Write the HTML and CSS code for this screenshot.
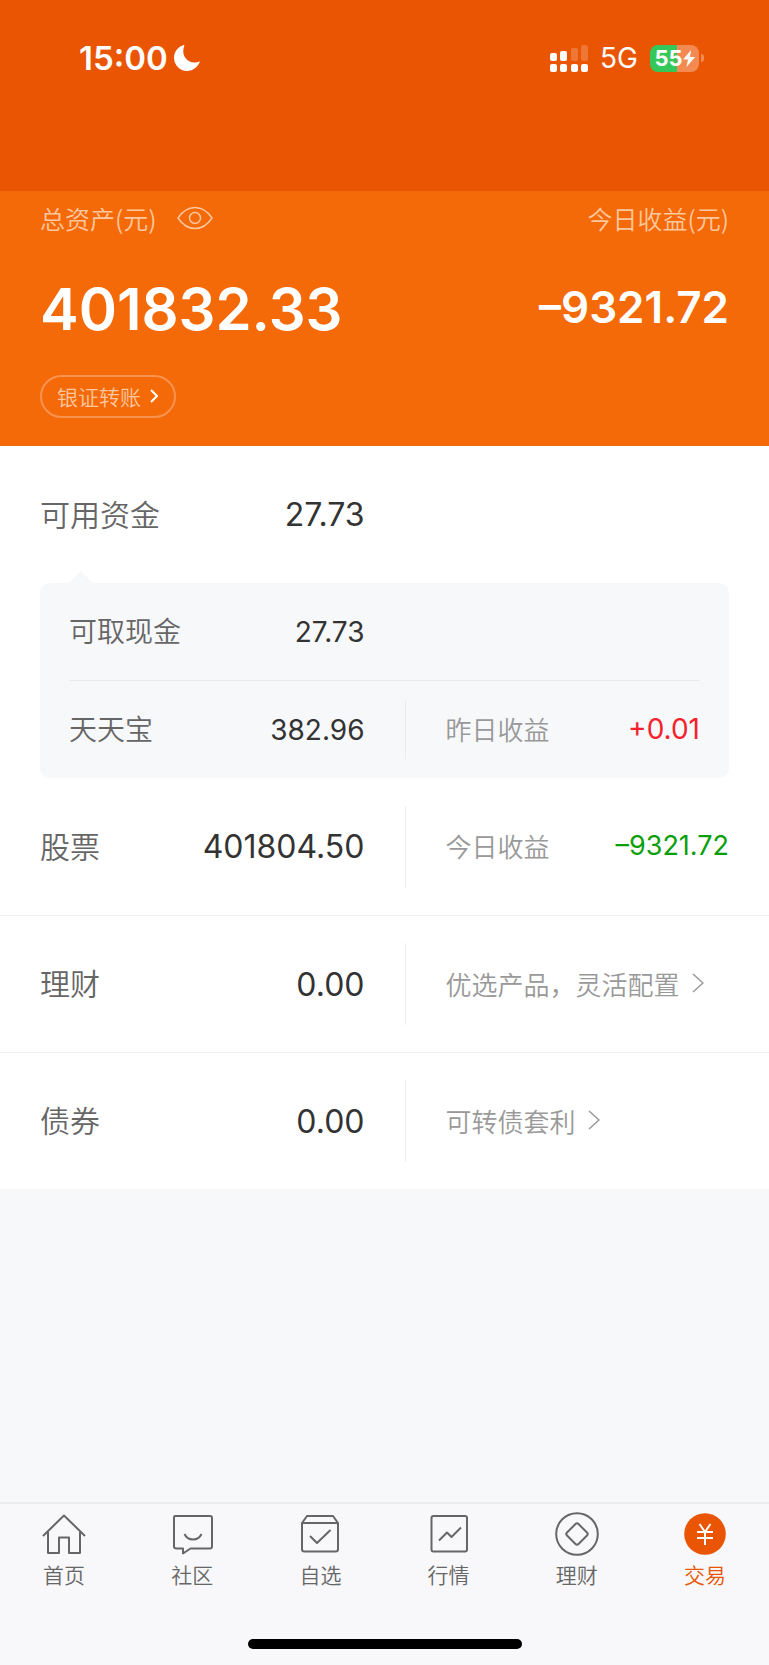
FILE: index.html
```html
<!DOCTYPE html>
<html lang="zh-CN">
<head>
  <meta charset="UTF-8">
  <meta name="viewport" content="width=device-width, initial-scale=1.0">
  <title>交易</title>
  <link rel="stylesheet" href="styles.css">
</head>
<body>
  <header class="status-bar">
    <div class="status-time">
      <span>15:00</span>
      <svg class="moon" viewBox="0 0 26 26"><path d="M10 0C4 1.500 0 6.800 0 12.800C0 20 5.800 26 13 26C18.800 26 23.800 22.300 26 16.600C25.400 16.300 25 16.600 24 16.900C15 19.500 7.800 12.500 9.500 3.500C9.800 2 10.800.6 10 0Z" fill="#fff"/></svg>
    </div>
    <div class="status-right">
      <svg class="signal" viewBox="0 0 38 28" fill="#fff">
        <rect x="0" y="9" width="7" height="8" rx="2"/>
        <rect x="10" y="7" width="7" height="10" rx="2"/>
        <rect x="21" y="4" width="7" height="13" rx="2" opacity=".2"/>
        <rect x="31" y="1" width="7" height="16" rx="2" opacity=".2"/>
        <rect x="0" y="20" width="7" height="8" rx="2"/>
        <rect x="10" y="20" width="7" height="8" rx="2"/>
        <rect x="21" y="20" width="7" height="8" rx="2"/>
        <rect x="31" y="20" width="7" height="8" rx="2"/>
      </svg>
      <span class="network">5G</span>
      <div class="battery">
        <div class="battery-body">
          <span>55</span>
          <svg class="bolt" viewBox="0 0 12 17"><path d="M8 0L0 9.500H5L3.500 17L12 7H7Z" fill="#fff"/></svg>
        </div>
        <span class="battery-cap"></span>
      </div>
    </div>
  </header>

  <section class="hero">
    <div class="hero-row hero-labels">
      <div class="hero-title">
        <span>总资产(元)</span>
        <button class="eye-btn" type="button" aria-label="显示或隐藏资产">
          <svg viewBox="0 0 36 24" fill="none" stroke="#fdc79f" stroke-width="1.500" stroke-linejoin="round"><path d="M1 12Q8 1.500 18 1.500T35 12Q28 22.500 18 22.500T1 12Z"/><circle cx="18" cy="12" r="5.500"/></svg>
        </button>
      </div>
      <span>今日收益(元)</span>
    </div>
    <div class="hero-row hero-amounts">
      <span class="total">401832.33</span>
      <span class="today">–9321.72</span>
    </div>
    <a class="transfer" href="#">银证转账
      <svg viewBox="0 0 8 14" fill="none" stroke="#fff" stroke-width="2"><path d="M1 1L7 7L1 13"/></svg>
    </a>
  </section>

  <main class="assets">
    <div class="row">
      <div class="main-cell"><span class="name">可用资金</span><span class="value">27.73</span></div>
    </div>

    <div class="panel">
      <div class="row">
        <div class="main-cell"><span class="name">可取现金</span><span class="value">27.73</span></div>
      </div>
      <div class="row">
        <div class="main-cell"><span class="name">天天宝</span><span class="value">382.96</span></div>
        <div class="side-cell"><span>昨日收益</span><span class="gain up">+0.01</span></div>
      </div>
    </div>

    <div class="row">
      <div class="main-cell"><span class="name">股票</span><span class="value">401804.50</span></div>
      <div class="side-cell"><span>今日收益</span><span class="gain down">–9321.72</span></div>
    </div>
    <div class="row line">
      <div class="main-cell"><span class="name">理财</span><span class="value">0.00</span></div>
      <div class="side-cell">
        <a href="#">优选产品，灵活配置
          <svg viewBox="0 0 12 20" fill="none" stroke="#999" stroke-width="1.500"><path d="M1 1L11 10L1 19"/></svg>
        </a>
      </div>
    </div>
    <div class="row line">
      <div class="main-cell"><span class="name">债券</span><span class="value">0.00</span></div>
      <div class="side-cell">
        <a href="#">可转债套利
          <svg viewBox="0 0 12 20" fill="none" stroke="#999" stroke-width="1.500"><path d="M1 1L11 10L1 19"/></svg>
        </a>
      </div>
    </div>
  </main>

  <footer class="bottom">
    <nav class="tabs">
      <a class="tab" href="#">
        <svg viewBox="0 0 44 44"><path d="M1 24L22 3.500L43 24M6 20V41H17V25.500H27V41H38V20"/></svg>
        <span>首页</span>
      </a>
      <a class="tab" href="#">
        <svg viewBox="0 0 44 44"><path d="M5 4H40Q42 4 42 6V34.500Q42 36.500 40 36.500H20.500L13 41.500V36.500H6.500Q4 36.500 4 34.500V6Q4 4 5 4Z"/><path d="M14.500 22Q17 27.500 23 27.500T31.500 22"/></svg>
        <span>社区</span>
      </a>
      <a class="tab" href="#">
        <svg viewBox="0 0 44 44"><path d="M4 11L9 4H35L40 11V37Q40 39.500 37.500 39.500H6.500Q4 39.500 4 37ZM4 11H40M12 24L19 31L32.500 18"/></svg>
        <span>自选</span>
      </a>
      <a class="tab" href="#">
        <svg viewBox="0 0 44 44"><rect x="4.500" y="4" width="35.500" height="35.500" rx="2"/><path d="M12 28.500L20 20.500L24.500 25L34 15.500"/></svg>
        <span>行情</span>
      </a>
      <a class="tab" href="#">
        <svg viewBox="0 0 44 44"><circle cx="22" cy="22" r="20.800"/><path d="M20.500 12Q22 10.500 23.500 12L32 20.500Q33.500 22 32 23.500L23.500 32Q22 33.500 20.500 32L12 23.500Q10.500 22 12 20.500Z"/></svg>
        <span>理财</span>
      </a>
      <a class="tab active" href="#">
        <svg viewBox="0 0 44 44"><circle class="coin" cx="22" cy="22" r="20.800"/><path class="yen" d="M16.500 12L22 20L27.500 12M14 20H30M14 26H30M22 20V33"/></svg>
        <span>交易</span>
      </a>
    </nav>
    <div class="home-bar"></div>
  </footer>
</body>
</html>
```
FILE: styles.css
```css
* {
  box-sizing: border-box;
}

body {
  margin: 0;
  min-height: 100vh;
  display: flex;
  flex-direction: column;
  font-family: "Noto Sans CJK SC", sans-serif;
  font-weight: 350;
  background-color: #f7f8fa;
  color: #333;
}

a {
  color: inherit;
  text-decoration: none;
}

svg {
  display: block;
  flex: none;
}

.status-bar,
.hero-amounts,
.value,
.gain {
  font-family: Inter, sans-serif;
}

/* status bar */
.status-bar {
  display: flex;
  justify-content: space-between;
  align-items: flex-start;
  height: 191px;
  padding: 38px 65px 0 79px;
  background-color: #ea5504;
  color: #fff;
}

.status-time,
.status-right {
  display: flex;
  align-items: center;
  height: 40px;
}

.status-time {
  gap: 6px;
  font-size: 33px;
  font-weight: 600;
}

.moon {
  width: 26px;
  height: 26px;
}

.signal {
  width: 38px;
  height: 28px;
}

.network {
  margin: 0 12px;
  font-size: 28px;
  font-weight: 400;
}

.battery {
  display: flex;
  align-items: center;
  gap: 2px;
}

.battery-body {
  display: flex;
  align-items: center;
  justify-content: center;
  width: 49px;
  height: 27px;
  border-radius: 8px;
  background: linear-gradient(to right, #34c759 55%, #f28a51 55%);
  font-size: 22px;
  font-weight: 700;
}

.bolt {
  width: 12px;
  height: 17px;
}

.battery-cap {
  width: 3px;
  height: 8px;
  border-radius: 0 3px 3px 0;
  background-color: #f28a51;
}

/* total assets */
.hero {
  height: 255px;
  padding: 8px 40px 0;
  background-color: #f56a08;
  color: #fdc79f;
}

.hero-row {
  display: flex;
  justify-content: space-between;
}

.hero-labels {
  height: 38px;
  align-items: center;
  font-size: 25px;
}

.hero-title {
  display: flex;
  align-items: center;
  gap: 20px;
}

.eye-btn {
  padding: 0;
  border: none;
  background: none;
  cursor: pointer;
}

.eye-btn svg {
  width: 36px;
  height: 24px;
}

.hero-amounts {
  height: 80px;
  margin: 32px 0 26px;
  line-height: 80px;
  color: #fff;
  font-weight: 600;
}

.total {
  font-size: 58px;
}

.today {
  font-size: 44px;
  line-height: 76px;
}

.transfer {
  display: inline-flex;
  align-items: center;
  gap: 9px;
  height: 43px;
  padding: 0 16px 2px 15px;
  border: 2px solid #f99350;
  border-radius: 22px;
  font-size: 21px;
}

.transfer svg {
  width: 8px;
  height: 14px;
}

/* asset list */
.assets {
  background-color: #fff;
}

.row {
  display: flex;
  align-items: center;
  height: 137px;
  padding: 0 40px;
}

.row.line {
  border-top: 1px solid #f0f0f2;
}

.main-cell {
  display: flex;
  align-items: center;
  justify-content: space-between;
  width: calc(50% - 20px);
}

.name {
  padding-bottom: 4px;
  font-size: 30px;
  color: #666;
}

.value {
  font-size: 32px;
  font-weight: 400;
}

.side-cell {
  flex: 1;
  display: flex;
  align-items: center;
  justify-content: space-between;
  height: 82px;
  margin-left: 40px;
  padding: 0 0 2px 40px;
  border-left: 1px solid #eeeff1;
  font-size: 26px;
  color: #999;
}

.side-cell a {
  display: flex;
  align-items: center;
  gap: 12px;
}

.side-cell svg {
  width: 12px;
  height: 20px;
}

.gain {
  font-size: 27px;
  font-weight: 400;
}

.up {
  color: #f5222d;
}

.down {
  color: #0a9f0a;
}

.panel {
  position: relative;
  margin: 0 40px;
  padding: 0 29px;
  border-radius: 10px;
  background-color: #f7f8fa;
}

/* arrow on the top edge */
.panel::before {
  content: "";
  position: absolute;
  left: 29px;
  top: -12px;
  border: 12px solid transparent;
  border-top: none;
  border-bottom-color: #f7f8fa;
}

.panel .row {
  height: 97px;
  padding: 0;
}

.panel .row + .row {
  height: 98px;
  border-top: 1px solid #e9ebed;
}

.panel .name {
  font-size: 28px;
}

.panel .value {
  font-size: 28px;
}

.panel .side-cell {
  height: 59px;
  border-color: #e9ebed;
}

.panel .gain {
  font-size: 28px;
}

/* tab bar */
.bottom {
  margin-top: auto;
  height: 163px;
  padding-top: 8px;
  border-top: 2px solid #ebecee;
  background-color: #f8f8fb;
}

.tabs {
  display: flex;
}

.tab {
  flex: 1;
  display: flex;
  flex-direction: column;
  align-items: center;
  gap: 2px;
  font-size: 21px;
  line-height: 32px;
  color: #666;
}

.tab svg {
  width: 44px;
  height: 44px;
  fill: none;
  stroke: #666;
  stroke-width: 2;
  stroke-linejoin: round;
}

.active {
  color: #ea5504;
}

.active .coin {
  fill: #ea5504;
  stroke: none;
}

.active .yen {
  stroke: #fff;
}

.home-bar {
  width: 274px;
  height: 10px;
  margin: 49px auto 0;
  border-radius: 5px;
  background-color: #000;
}
```
